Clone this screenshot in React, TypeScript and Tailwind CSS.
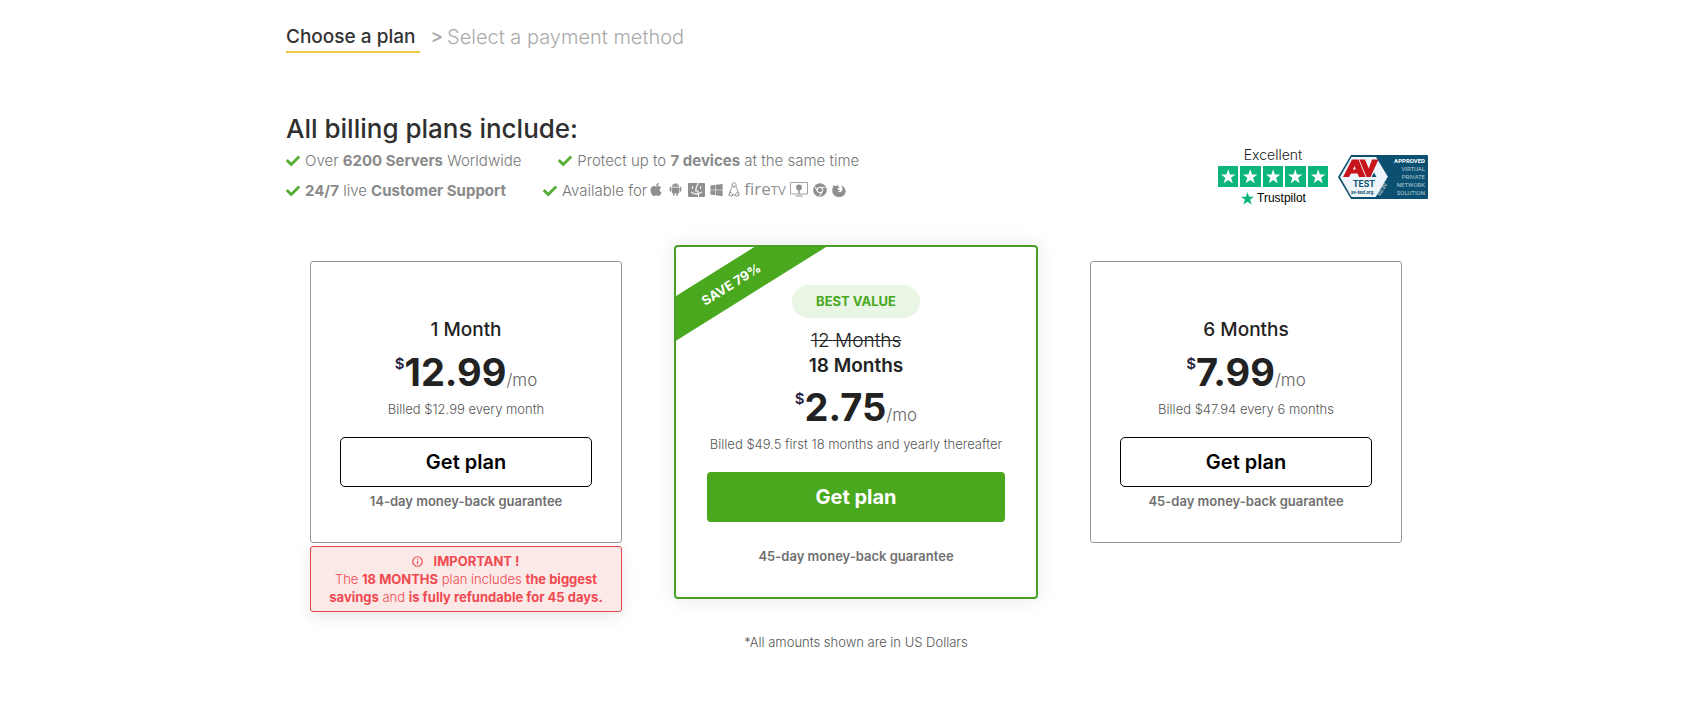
import type { ReactNode } from "react";
import { FaApple, FaCheck, FaChrome, FaWindows } from "react-icons/fa";
import { IoLogoAndroid } from "react-icons/io";

const STAR =
  "M12 1.5l2.6 7.6h8l-6.4 4.8 2.4 7.8L12 17l-6.6 4.7 2.4-7.8L1.4 9.1h8z";

const FinderIcon = () => (
  <svg viewBox="0 0 17 14" className="h-[14px] w-[17px]" aria-label="macOS">
    <rect width="17" height="14" rx="1" fill="#8f8f8f" />
    <g fill="none" stroke="#fff" strokeWidth="1.1" strokeLinecap="round">
      <path d="M10 0.5C8.4 3 7.8 5.2 7.7 8h2.2c0 2.2.2 4 .8 5.5" />
      <path d="M4.5 3.6v1.6M12.6 3.6v1.6" />
      <path d="M3.4 9.2c2.8 2.5 7.4 2.5 10.2 0" />
    </g>
  </svg>
);

const LinuxIcon = () => (
  <svg viewBox="0 0 12 15" className="h-[15px] w-3" fill="none" stroke="#8f8f8f" aria-label="Linux">
    <path d="M1.9 11c0-1.100.2-2.200.9-3.400.9-1.500 1.400-2.200 1.300-4C3.900 2 4.500.7 6 .7s2.200 1.300 2 2.900c-.1 1.800.4 2.500 1.300 4 .7 1.200.9 2.300.9 3.400" />
    <path d="M4.500 12.900h3M1.900 10.500l-1.200 2.600 3 1.200 1-1.300-1.700-2.500zM10.100 10.500l1.200 2.600-3 1.200-1-1.300 1.700-2.500z" />
    <path d="M4.900 4.500L6 5.400l1.100-.9L6 4z" fill="#8f8f8f" strokeWidth=".6" />
  </svg>
);

const SmartTvIcon = () => (
  <svg viewBox="0 0 18 15" className="h-[15px] w-[18px]" aria-label="Smart TV">
    <path d="M.5.5h17v11.500H.5z" fill="none" stroke="#a3a3a3" />
    <circle cx="9" cy="5.500" r="2.900" fill="#8f8f8f" />
    <path d="M8.300 7.500h1.400V12H8.300zM5.500 13.500h7v1h-7z" fill="#8f8f8f" />
  </svg>
);

const FirefoxIcon = () => (
  <svg viewBox="0 0 14 14" className="h-[14px] w-[14px]" aria-label="Firefox">
    <path
      d="M1.200 2.100l1.200 1c.7-.4 1.600-.4 2.300-.1.500-.8 1.200-1.200 2-1.300-.6.700-.8 1.400-.7 2.100l1.500.3c-.2.900-.9 1.200-1.700 1.500l-.3 1.300c1 .2 1.600-.6 2.800-.1-.5 1.100-1.600 1.700-2.900 1.500 1.300 1.300 3.900 1 4.800-.9.700-1.700.2-3.400-1.200-4.900 2.600.9 4.300 2.700 4.600 5.200C14 11.200 11 14 7.200 14 3.200 14 .2 11.200.2 7.400c0-1.400.3-2.500.9-3.400z"
      fill="#8f8f8f"
    />
  </svg>
);

const InfoIcon = () => (
  <svg viewBox="0 0 12 12" className="h-[11px] w-[11px]" fill="none" stroke="currentColor" strokeWidth="1.3">
    <circle cx="6" cy="6" r="5.200" />
    <path d="M6 5.300v3.500M6 3v1.200" />
  </svg>
);

const TrustpilotRating = () => (
  <div className="flex w-[110px] flex-col items-center">
    <span className="text-sm leading-[22px] font-light text-[#222]">Excellent</span>
    <div className="flex w-full gap-[2px]" role="img" aria-label="5 stars">
      {[1, 2, 3, 4, 5].map((n) => (
        <svg key={n} viewBox="0 0 24 24" className="h-[21px] min-w-0 flex-1 bg-[#0cb67a] px-[2px]">
          <path d={STAR} fill="#fff" />
        </svg>
      ))}
    </div>
    <div className="mt-[3px] flex items-center gap-[2px]">
      <svg viewBox="0 0 24 24" className="h-[15px] w-[15px]">
        <path d={STAR} fill="#0cb67a" />
      </svg>
      <span className="font-['Liberation_Sans',sans-serif] text-[12px] leading-4 text-black">Trustpilot</span>
    </div>
  </div>
);

const AvTestBadge = () => (
  <svg viewBox="0 0 90 44" className="mt-1 h-11 w-[90px]" fontFamily="Roboto, sans-serif">
    <path d="M13 0h76a1 1 0 0 1 1 1v42a1 1 0 0 1-1 1H13L0 22z" fill="#0b5070" />
    <path d="M13.500 2h24.500L50 22 38 42H13.500L2 22z" fill="#eef5fa" />
    <path
      d="M5 22L14 4.500h6.500L27.500 22H21l-1.500-3.500H13L11 22zM14.800 14.500h3L16.800 11z"
      fill="#c8151c"
      fillRule="evenodd"
    />
    <path d="M21.300 4.500H27l3.800 9L34 4.500h6.500L32.500 22h-4z" fill="#c8151c" />
    <path d="M33.500 22l2.500-4.500 2.500 4.500z" fill="#0b5070" />
    <text x="15" y="31.500" fontSize="9" fontWeight="700" fill="#0b5070">TEST</text>
    <text x="13" y="39" fontSize="4.500" fontWeight="700" fill="#0b5070">av-test.org</text>
    <path d="M39.500 44L52 23" stroke="#0b5070" strokeWidth="5" />
    <text transform="translate(42 41) rotate(-59)" fontSize="5" fill="#fff">02/20</text>
    <g fill="#b4cbd7" fontSize="6" textAnchor="end">
      <text x="87" y="8" fontWeight="700" fill="#fff">APPROVED</text>
      <text x="87" y="16">VIRTUAL</text>
      <text x="87" y="24">PRIVATE</text>
      <text x="87" y="32">NETWORK</text>
      <text x="87" y="40">SOLUTION</text>
    </g>
  </svg>
);

const Feature = ({ children }: { children: ReactNode }) => (
  <li className="flex h-[30px] items-center gap-[5px]">
    <FaCheck className="h-[14px] w-[14px] text-[#56ad33]" />
    <span>{children}</span>
  </li>
);

const Price = ({ amount }: { amount: string }) => (
  <p className="flex h-12 items-baseline justify-center leading-[48px] text-[#222]">
    <span className="self-start text-[15px] leading-8 font-semibold text-[#262545]">$</span>
    <span className="text-[38px] font-bold">{amount}</span>
    <span className="text-[17px] font-light text-[#666]">/mo</span>
  </p>
);

type PlanProps = { title: string; amount: string; billed: string; guarantee: string };

const PlanCard = ({ title, amount, billed, guarantee }: PlanProps) => (
  <div className="rounded-[3px] border border-[#949698] px-[29px] pt-14 pb-[31px] text-center">
    <h2 className="text-[19px] leading-6 font-medium text-[#222]">{title}</h2>
    <div className="mt-[6px]">
      <Price amount={amount} />
    </div>
    <p className="mt-[3px] text-[13px] leading-5 font-light text-[#555]">{billed}</p>
    <button className="mt-[18px] h-[50px] w-full rounded-[5px] border border-black text-[20px] font-semibold text-black">
      Get plan
    </button>
    <p className="mt-1 text-[13px] leading-5 font-semibold text-[#707070]">{guarantee}</p>
  </div>
);

const BestValueCard = () => (
  <div className="relative overflow-hidden rounded-[4px] border-2 border-[#4aa026] px-[31px] pt-[38px] pb-[31px] text-center shadow-[0_0_20px_rgba(0,0,0,0.1)]">
    {/* Corner ribbon */}
    <div className="absolute top-[18px] -left-[65px] h-[38px] w-[240px] -rotate-32 bg-[#4aa81f] text-[13px] leading-[38px] font-bold text-white">
      SAVE 79%
    </div>
    <p className="mx-auto h-[33px] w-fit rounded-full bg-[#e9f5e5] px-6 text-[13px] leading-[33px] font-bold text-[#4aa81f]">
      BEST VALUE
    </p>
    <p className="mt-[10px] text-[19px] leading-[25px] font-light text-[#222] line-through">12 Months</p>
    <h2 className="text-[19px] leading-[25px] font-semibold text-[#222]">18 Months</h2>
    <div className="mt-[5px]">
      <Price amount="2.75" />
    </div>
    <p className="mt-[3px] text-[13px] leading-5 font-light text-[#555]">
      Billed $49.5 first 18 months and yearly thereafter
    </p>
    <button className="mt-[18px] h-[50px] w-full rounded-[4px] bg-[#4aa81f] text-[20px] font-bold text-white">
      Get plan
    </button>
    <p className="mt-6 text-[13px] leading-5 font-semibold text-[#707070]">45-day money-back guarantee</p>
  </div>
);

export default function App() {
  return (
    <div className="bg-white pl-[29px] font-['Inter',sans-serif]">
      <main className="mx-auto max-w-[1142px] pt-[25px] pb-10">
        {/* Checkout steps */}
        <nav className="flex items-start text-[19px] leading-6">
          <a href="#plan" className="border-b-2 border-[#e8c93f] pr-[5px] pb-[2px] font-medium text-[#333]">
            Choose a plan
          </a>
          <span className="ml-[10px] font-medium text-[#aaa]">&gt;</span>
          <a href="#payment" className="ml-1 text-[20px] font-light text-[#aaa]">
            Select a payment method
          </a>
        </nav>

        <header className="mt-[59px] flex items-end justify-between">
          <div>
            <h1 className="text-[26px] leading-[34px] font-medium text-[#2f2f2f]">All billing plans include:</h1>
            <ul className="flex gap-[37px] text-[15px] leading-[30px] font-light text-[#777]">
              <Feature>
                Over <b className="font-bold text-[#8a8a8a]">6200 Servers</b> Worldwide
              </Feature>
              <Feature>
                Protect up to <b className="font-bold text-[#8a8a8a]">7 devices</b> at the same time
              </Feature>
            </ul>
            <ul className="flex gap-[37px] text-[15px] leading-[30px] font-light text-[#777]">
              <Feature>
                <b className="font-bold text-[#8a8a8a]">24/7</b> live{" "}
                <b className="font-bold text-[#8a8a8a]">Customer Support</b>
              </Feature>
              <Feature>
                <span className="flex items-center gap-[2px]">
                  <span>Available for</span>
                  <span className="flex items-center gap-1 pb-[3px] text-[#8f8f8f]">
                    <FaApple className="h-[15px] w-[14px]" />
                    <IoLogoAndroid className="h-[17px] w-[17px]" />
                    <FinderIcon />
                    <FaWindows className="h-[14px] w-[15px]" />
                    <LinuxIcon />
                    <span className="font-['Open_Sans',sans-serif] text-[17px] leading-[22px] font-normal">
                      fire<span className="text-[13px]">TV</span>
                    </span>
                    <SmartTvIcon />
                    <FaChrome className="mx-px h-[14px] w-[14px]" />
                    <FirefoxIcon />
                  </span>
                </span>
              </Feature>
            </ul>
          </div>
          <div className="flex items-center gap-[10px]">
            <TrustpilotRating />
            <AvTestBadge />
          </div>
        </header>

        {/* Plans */}
        <section className="mt-[39px] grid grid-cols-[6fr_7fr_6fr] items-start gap-[52px] pr-[26px] pl-6">
          <div className="mt-4">
            <PlanCard
              title="1 Month"
              amount="12.99"
              billed="Billed $12.99 every month"
              guarantee="14-day money-back guarantee"
            />
            <div className="mt-[3px] rounded-[3px] border border-[#e0464c] bg-[#fbe9e8] px-4 py-[5px] text-center text-[13px] leading-[18px] font-light text-[#ef4a50] shadow-[0_4px_16px_rgba(0,0,0,0.1)]">
              <p className="flex items-center justify-center gap-[10px] font-bold">
                <InfoIcon /> IMPORTANT !
              </p>
              <p>
                The <b className="font-bold">18 MONTHS</b> plan includes <b className="font-bold">the biggest savings</b> and{" "}
                <b className="font-bold">is fully refundable for 45 days.</b>
              </p>
            </div>
          </div>
          <BestValueCard />
          <div className="mt-4">
            <PlanCard
              title="6 Months"
              amount="7.99"
              billed="Billed $47.94 every 6 months"
              guarantee="45-day money-back guarantee"
            />
          </div>
        </section>

        <p className="mt-5 pr-[26px] pl-6 text-center text-[13px] leading-5 font-light text-[#555]">
          *All amounts shown are in US Dollars
        </p>
      </main>
    </div>
  );
}
